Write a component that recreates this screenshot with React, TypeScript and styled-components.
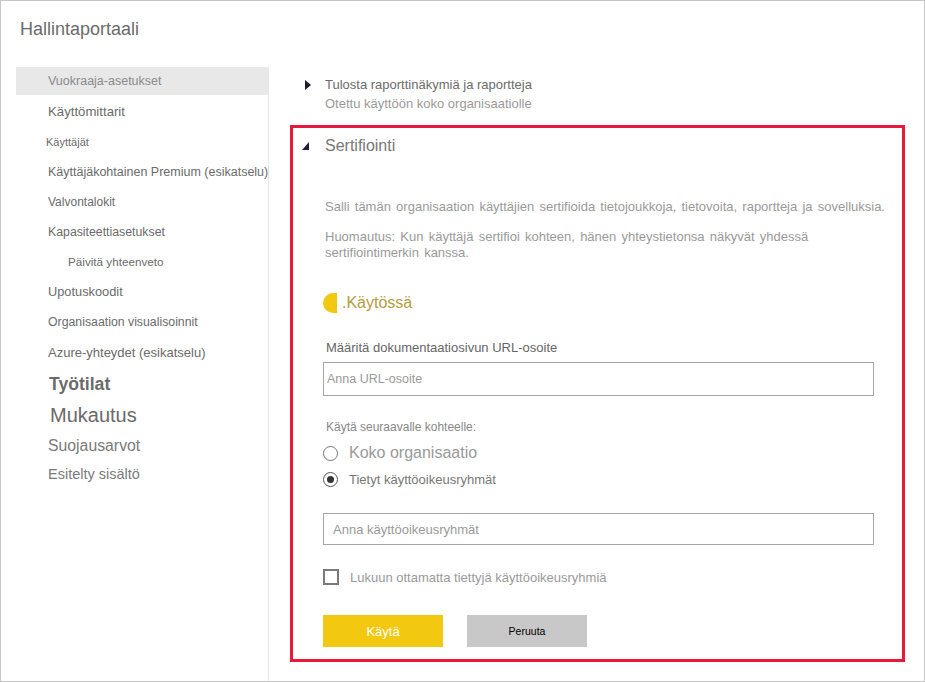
import styled, { createGlobalStyle } from "styled-components";

const GlobalStyle = createGlobalStyle`
  html, body {
    margin: 0;
    padding: 0;
    background: #fff;
  }
  body {
    font-family: "Liberation Sans", Arial, sans-serif;
  }
`;

type NavEntry = {
  label: string;
  size: number;
  h: number;
  indent?: number;
  bold?: boolean;
  color?: string;
  selected?: boolean;
};

const navItems: NavEntry[] = [
  { label: "Vuokraaja-asetukset", size: 12.5, h: 28, selected: true, color: "#8a8a8a" },
  { label: "Käyttömittarit", size: 13.2, h: 30 },
  { label: "Käyttäjät", size: 11, h: 30, indent: 30 },
  { label: "Käyttäjäkohtainen Premium (esikatselu)", size: 12.5, h: 30 },
  { label: "Valvontalokit", size: 12, h: 30 },
  { label: "Kapasiteettiasetukset", size: 12.3, h: 30 },
  { label: "Päivitä yhteenveto", size: 11.7, h: 30, indent: 52 },
  { label: "Upotuskoodit", size: 12.8, h: 30 },
  { label: "Organisaation visualisoinnit", size: 12.3, h: 30 },
  { label: "Azure-yhteydet (esikatselu)", size: 13, h: 31 },
  { label: "Työtilat", size: 17.6, h: 32, bold: true, indent: 33 },
  { label: "Mukautus", size: 20, h: 31, indent: 34, color: "#6a6a6a" },
  { label: "Suojausarvot", size: 15.8, h: 29, color: "#7a7a7a" },
  { label: "Esitelty sisältö", size: 14.5, h: 28, color: "#7a7a7a" },
];

const RightArrow = () => (
  <svg width="6" height="10" viewBox="0 0 6 10">
    <path d="M0 0 L6 5 L0 10 Z" fill="#1c1c2e" />
  </svg>
);

const ExpandedArrow = () => (
  <svg width="7" height="8" viewBox="0 0 7 8">
    <path d="M7 0 L7 8 L0 8 Z" fill="#1f1f3d" />
  </svg>
);

export default function App() {
  return (
    <>
      <GlobalStyle />
      <Frame>
        <Header>Hallintaportaali</Header>
        <Body>
          <Sidebar>
            {navItems.map((item) => (
              <NavItem
                key={item.label}
                $size={item.size}
                $h={item.h}
                $indent={item.indent ?? 32}
                $bold={!!item.bold}
                $color={item.color ?? "#6b6b6b"}
                $selected={!!item.selected}
              >
                {item.label}
              </NavItem>
            ))}
          </Sidebar>

          <Main>
            <CollapsedRow>
              <RightArrow />
              <SettingTitle>Tulosta raporttinäkymiä ja raportteja</SettingTitle>
            </CollapsedRow>
            <SettingStatus>Otettu käyttöön koko organisaatiolle</SettingStatus>

            <Highlight>
              <SectionHeader>
                <ExpandedArrow />
                <SectionTitle>Sertifiointi</SectionTitle>
              </SectionHeader>

              <Description>
                Salli tämän organisaation käyttäjien sertifioida tietojoukkoja, tietovoita, raportteja ja sovelluksia.
              </Description>
              <Note>
                Huomautus: Kun käyttäjä sertifioi kohteen, hänen yhteystietonsa näkyvät yhdessä sertifiointimerkin
                kanssa.
              </Note>

              <ToggleRow>
                <ToggleKnob />
                <ToggleLabel>.Käytössä</ToggleLabel>
              </ToggleRow>

              <FieldLabel>Määritä dokumentaatiosivun URL-osoite</FieldLabel>
              <TextField $h={34} $pad={3} $size={12.5} placeholder="Anna URL-osoite" />

              <GroupLabel>Käytä seuraavalle kohteelle:</GroupLabel>
              <RadioRow $first>
                <Radio />
                <RadioText $size={16} $color="#9a9a9a">
                  Koko organisaatio
                </RadioText>
              </RadioRow>
              <RadioRow>
                <Radio $checked />
                <RadioText $size={13} $color="#777">
                  Tietyt käyttöoikeusryhmät
                </RadioText>
              </RadioRow>

              <TextField $h={32} $pad={9} $size={13} $top={24} placeholder="Anna käyttöoikeusryhmät" />

              <CheckRow>
                <CheckBox />
                <CheckText>Lukuun ottamatta tiettyjä käyttöoikeusryhmiä</CheckText>
              </CheckRow>

              <Buttons>
                <Button $primary>Käytä</Button>
                <Button>Peruuta</Button>
              </Buttons>
            </Highlight>
          </Main>
        </Body>
      </Frame>
    </>
  );
}

const Frame = styled.div`
  width: 925px;
  height: 682px;
  box-sizing: border-box;
  border: 1px solid #c6c6c6;
  display: flex;
  flex-direction: column;
  overflow: hidden;
`;

const Header = styled.div`
  height: 66px;
  box-sizing: border-box;
  padding: 18px 0 0 19px;
  font-size: 18px;
  line-height: 21px;
  color: #6b6b6b;
`;

const Body = styled.div`
  flex: 1;
  display: flex;
  min-height: 0;
`;

const Sidebar = styled.nav`
  width: 253px;
  flex-shrink: 0;
  margin-left: 15px;
  box-sizing: border-box;
  border-right: 1px solid #e6e6e6;
  display: flex;
  flex-direction: column;
`;

type NavItemProps = {
  $size: number;
  $h: number;
  $indent: number;
  $bold: boolean;
  $color: string;
  $selected: boolean;
};

const NavItem = styled.div<NavItemProps>`
  height: ${(p) => p.$h}px;
  line-height: ${(p) => p.$h}px;
  padding-left: ${(p) => p.$indent}px;
  margin-bottom: ${(p) => (p.$selected ? 2 : 0)}px;
  font-size: ${(p) => p.$size}px;
  font-weight: ${(p) => (p.$bold ? 700 : 400)};
  color: ${(p) => p.$color};
  background: ${(p) => (p.$selected ? "#e8e8e8" : "transparent")};
  white-space: nowrap;
`;

const Main = styled.main`
  flex: 1;
  min-width: 0;
  padding: 8px 19px 0 21px;
`;

const CollapsedRow = styled.div`
  display: flex;
  align-items: center;
  gap: 14px;
  padding-left: 15px;
  height: 19px;
`;

const SettingTitle = styled.span`
  font-size: 13px;
  color: #6b6b6b;
`;

const SettingStatus = styled.div`
  padding-left: 35px;
  font-size: 13px;
  line-height: 19px;
  color: #9a9a9a;
`;

const Highlight = styled.section`
  margin-top: 12px;
  border: 3px solid #e8193c;
  padding: 0 28px 12px 30px;
`;

const SectionHeader = styled.div`
  display: flex;
  align-items: center;
  gap: 16px;
  margin-left: -21px;
  padding-top: 8px;
  height: 20px;
`;

const SectionTitle = styled.span`
  font-size: 16px;
  line-height: 20px;
  color: #777;
`;

const Description = styled.p`
  margin: 43px 0 0 2px;
  font-size: 13px;
  line-height: 16px;
  word-spacing: 1.6px;
  color: #9a9a9a;
  white-space: nowrap;
`;

const Note = styled.p`
  margin: 14px 0 0 2px;
  max-width: 500px;
  font-size: 13px;
  line-height: 16px;
  word-spacing: 1.6px;
  color: #9a9a9a;
`;

const ToggleRow = styled.div`
  margin-top: 32px;
  height: 20px;
  display: flex;
  align-items: center;
  gap: 5px;
`;

const ToggleKnob = styled.span`
  width: 14px;
  height: 20px;
  border-radius: 10px 0 0 10px;
  background: #f2c811;
`;

const ToggleLabel = styled.span`
  font-size: 16px;
  color: #b49c3e;
`;

const FieldLabel = styled.div`
  margin: 27px 0 0 3px;
  font-size: 13px;
  line-height: 16px;
  color: #666;
`;

const TextField = styled.input<{ $h: number; $pad: number; $size: number; $top?: number }>`
  display: block;
  width: 100%;
  box-sizing: border-box;
  height: ${(p) => p.$h}px;
  margin: ${(p) => p.$top ?? 6}px 0 0;
  padding: 0 ${(p) => p.$pad}px;
  border: 1px solid #a6a6a6;
  border-radius: 0;
  font-family: inherit;
  font-size: ${(p) => p.$size}px;
  color: #444;
  outline: none;

  &::placeholder {
    color: #9a9a9a;
  }
`;

const GroupLabel = styled.div`
  margin: 23px 0 0 3px;
  font-size: 12px;
  line-height: 16px;
  color: #888;
`;

const RadioRow = styled.div<{ $first?: boolean }>`
  margin-top: ${(p) => (p.$first ? 8 : 6)}px;
  height: 20px;
  display: flex;
  align-items: center;
  gap: 11px;
`;

const Radio = styled.span<{ $checked?: boolean }>`
  position: relative;
  width: 15px;
  height: 15px;
  box-sizing: border-box;
  border-radius: 50%;
  border: 1px solid ${(p) => (p.$checked ? "#555" : "#777")};
  flex-shrink: 0;

  &::after {
    content: "";
    display: ${(p) => (p.$checked ? "block" : "none")};
    position: absolute;
    left: 3px;
    top: 3px;
    width: 7px;
    height: 7px;
    border-radius: 50%;
    background: #333;
  }
`;

const RadioText = styled.span<{ $size: number; $color: string }>`
  font-size: ${(p) => p.$size}px;
  color: ${(p) => p.$color};
`;

const CheckRow = styled.div`
  margin-top: 24px;
  height: 16px;
  display: flex;
  align-items: center;
  gap: 11px;
`;

const CheckBox = styled.span`
  width: 16px;
  height: 16px;
  box-sizing: border-box;
  border: 2px solid #7a7a7a;
  flex-shrink: 0;
`;

const CheckText = styled.span`
  font-size: 13px;
  color: #9a9a9a;
`;

const Buttons = styled.div`
  margin-top: 30px;
  display: flex;
  gap: 24px;
`;

const Button = styled.button<{ $primary?: boolean }>`
  width: 120px;
  height: 32px;
  border: none;
  border-radius: 0;
  padding: 0;
  font-family: inherit;
  font-size: ${(p) => (p.$primary ? 13 : 10.5)}px;
  color: ${(p) => (p.$primary ? "#fff" : "#000")};
  background: ${(p) => (p.$primary ? "#f2c811" : "#c8c8c8")};
`;
